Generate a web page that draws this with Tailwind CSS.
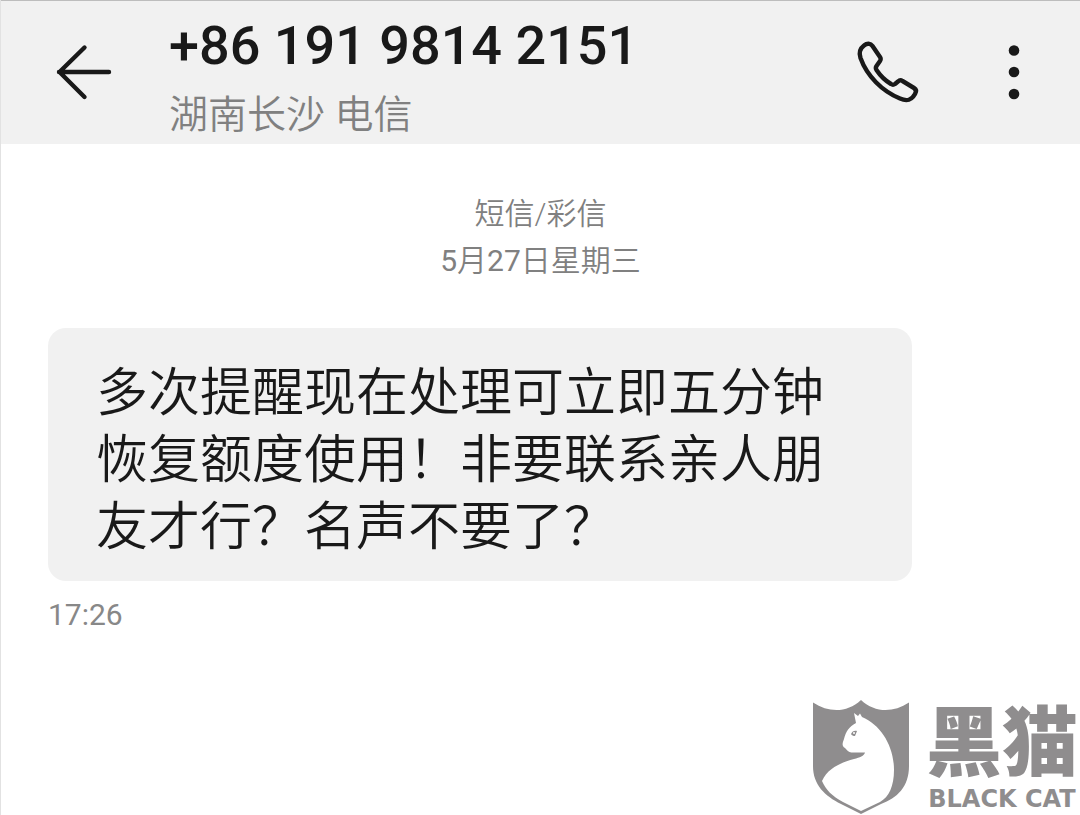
<!DOCTYPE html>
<html lang="zh-CN">
<head>
<meta charset="utf-8">
<meta name="viewport" content="width=device-width, initial-scale=1">
<title>短信</title>
<script src="https://cdn.jsdelivr.net/npm/@tailwindcss/browser@4"></script>
</head>
<body class="relative flex min-h-screen flex-col overflow-x-hidden border-l border-[#e2e2e2] bg-white font-['Roboto','Noto_Sans_CJK_SC',sans-serif] text-[#191919]">
  <header class="flex items-start border-t border-[#bdbdbd] bg-[#f1f1f1] pr-[30px] pb-1 pl-12">
    <button type="button" aria-label="返回" class="mt-9 size-[72px] shrink-0">
      <svg class="size-full" viewBox="0 0 72 72" fill="none" stroke="currentColor" stroke-width="4.4" stroke-linecap="round" stroke-linejoin="round"><path d="M60 35H10M35.500 10.500L10.500 35L35.500 60"/></svg>
    </button>
    <div class="ml-12 min-w-0 flex-1 pt-[13px]">
      <h1 class="text-[54px] leading-[64px] font-medium whitespace-nowrap">+86 191 9814 2151</h1>
      <p class="mt-3 text-[39px] leading-[50px] font-[350] text-[#808080]">湖南长沙 电信</p>
    </div>
    <button type="button" aria-label="拨打电话" class="mt-9 size-[72px] shrink-0">
      <svg class="size-full" viewBox="0 0 72 72" fill="none" stroke="currentColor" stroke-width="4.400" stroke-linejoin="round"><path d="M11 8.500C14 6 17.500 6 19.500 9L27 20C28 21.500 28 22.500 27 24L23.500 29C22.500 30.500 22.500 31.500 23.500 33C27.500 39 32 43.500 38 47C39.500 48 40.500 48 42 47L45 44.500C46.500 43 48 43 49.500 44L61 51C63.500 52.500 63.500 54.500 62 57C58.500 63.500 54 64.500 47 61.500C29 54 14 39 7.500 21C5.500 15 7 11.500 11 8.500Z"/></svg>
    </button>
    <button type="button" aria-label="更多" class="mt-9 ml-[53px] size-[72px] shrink-0">
      <svg class="size-full" viewBox="0 0 72 72" fill="currentColor"><circle cx="36" cy="13.500" r="5.300"/><circle cx="36" cy="35" r="5.300"/><circle cx="36" cy="57" r="5.300"/></svg>
    </button>
  </header>

  <main class="flex-1 px-[47px] pt-[46px]">
    <div class="text-center text-[30px] leading-[47px] font-[350] text-[#808080]">
      <p>短信/彩信</p>
      <p><span class="font-normal">5</span>月<span class="font-normal">27</span>日星期三</p>
    </div>
    <p class="mt-11 w-[calc(100%-121px)] rounded-[18px] bg-[#f1f1f1] px-12 pt-8 pb-5 text-[52px] leading-[67px] font-[350]">多次提醒现在处理可立即五分钟恢复额度使用！非要联系亲人朋友才行？名声不要了？</p>
    <time class="mt-4 block text-[30px] leading-9 text-[#888888]">17:26</time>
  </main>

  <div class="absolute right-0.5 bottom-0 flex items-start gap-4 text-[#8f8d8e]">
    <svg class="h-[116px] w-[98px] shrink-0" viewBox="0 0 98 116" role="img" aria-label="黑猫">
      <path fill="currentColor" d="M1 3.500C17 14 35 14 49 1C63 14 81 14 97 3.500V67C97 88 85 99 69 105L49 115L29 105C13 97 1 86 1 67Z"/>
      <path fill="#fff" d="M42 14L46 17L48 14.500L50 18C69 26 82 47 82 71C82 87 77 98 68 103L49 112L31 103C20 97 14 91 10 82C16 69 28 64 42 60C48 58.500 52 57 53 53.500H40C37 54 35 51 33 49C29 47 31 43 32 40C34 32 37 28 44 24Z"/>
      <path fill="currentColor" d="M39 35C40 32 43 31 45 32L43 37C41 37 40 36.500 39 35Z"/><circle cx="42" cy="34" r="1" fill="#fff"/>
    </svg>
    <div class="flex flex-col items-center">
      <span class="text-[76px] leading-[90px] font-black whitespace-nowrap">黑猫</span>
      <span class="font-['DejaVu_Sans',sans-serif] text-[24px] leading-5 font-bold whitespace-nowrap">BLACK CAT</span>
    </div>
  </div>
</body>
</html>
